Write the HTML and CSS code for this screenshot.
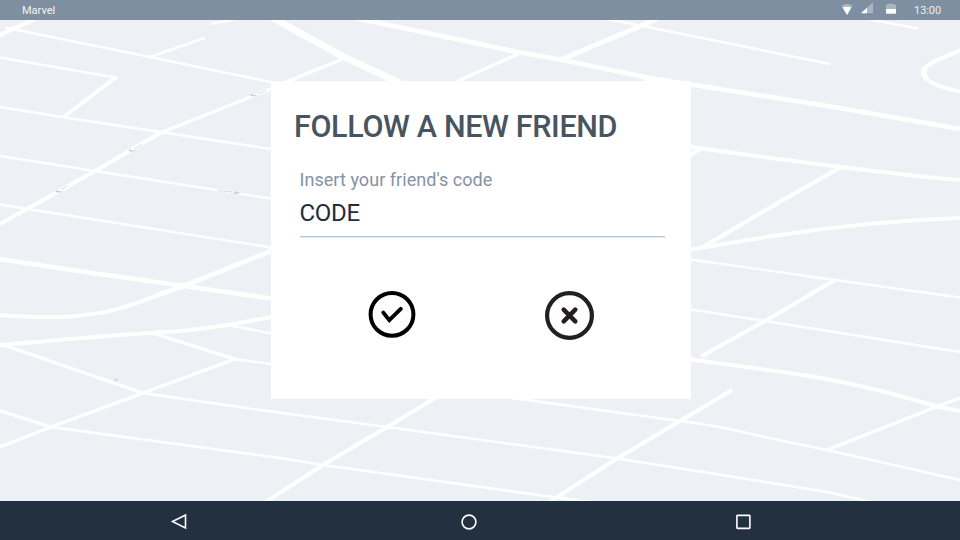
FILE: index.html
```html
<!DOCTYPE html>
<html lang="en">
<head>
<meta charset="utf-8">
<title>Follow a new friend</title>
<link rel="stylesheet" href="styles.css">
</head>
<body>
<div class="screen">
  <header class="status-bar">
    <span class="carrier">Marvel</span>
    <div class="status-icons">
      <svg class="status-svg" width="54" height="20" viewBox="841 0 54 20">
        <path d="M841.500 5.500Q847 2.500 852.500 5.500L847 15Z" fill="#aab5c2"/>
        <path d="M842.500 7.300Q847 6 851.500 7.300L847 15Z" fill="#fff"/>
        <path d="M861 13.300 873 2.300V13.300Z" fill="#aab5c2"/>
        <path d="M861 13.300 867 7.800V13.300Z" fill="#fff"/>
        <path d="M886 9V5.200Q886 4.500 887 4.500H888V3.800H893.500V4.500H895Q896 4.500 896 5.200V9Z" fill="#aab5c2"/>
        <path d="M886 9H896V13Q896 13.800 895.200 13.800H886.800Q886 13.800 886 13Z" fill="#fff"/>
      </svg>
      <span class="clock">13:00</span>
    </div>
  </header>

  <main class="stage">
    <svg class="map" viewBox="0 20 960 481" width="960" height="481" aria-hidden="true">
      <g class="road thin">
        <path d="M5 27.500 150 57 271 82"/>
        <path d="M150 57 204.500 38"/>
        <path d="M0 57.500 118 78"/>
        <path d="M0 107 62 117 160 132 271 149"/>
        <path d="M0 156 95 171 271 198.500"/>
        <path d="M0 204.500 28 209 271 247.500"/>
        <path d="M228 325 271 333.500"/>
        <path d="M235 359 271 364"/>
        <path d="M143 393 260 410 387 427 617 458.500 700 471.500 827 492 872 502"/>
        <path d="M51 427 280 458 323 465 553 497 590 502"/>
        <path d="M512 398 600 410 680 421Q715 425 760 436L827 450 960 480"/>
        <path d="M691 259.500 835 280 960 297.500"/>
        <path d="M691 309.500 765 321 960 352"/>
        <path d="M607 19 680 33.500 830 64"/>
        <path d="M868 19 918 28.500"/>
        <path d="M211 24 236 19"/>
      </g>
      <g class="road medium">
        <path d="M152 333 235 359 143 393 51 427 0 447"/>
        <path d="M5 345.500 143 393"/>
        <path d="M0 411 51 427"/>
        <path d="M827 450 937 406.500 960 398"/>
        <path d="M344 58.500 286 82"/>
        <path d="M520 53 457 81.500"/>
        <path d="M271 89 160 133"/>
        <path d="M645 81 655 78"/>
      </g>
      <g class="road wide">
        <path d="M160 133 95 171 43 200 0 224"/>
        <path d="M-1 35.500 35 19"/>
        <path d="M115 78 63.500 117"/>
        <path d="M0 345C50 341 100 336 152 333Q190 331 228 325L271 317"/>
        <path d="M0 315C25 317 60 318 82 315.500C115 312 135 304 160 294.500"/>
        <path d="M437 397 387 427 323 465 264 503"/>
        <path d="M732 390 680 421 617 458.500 548 503"/>
        <path d="M691 359.500 790 373Q860 383 937 406.500L960 411"/>
        <path d="M701 356.500 765 321 835 280"/>
        <path d="M691 249.500 773 236Q870 221 960 218"/>
        <path d="M702 247.500 783 200 841 167"/>
        <path d="M691 147Q770 158 841 167T960 180"/>
        <path d="M690 155 700 149"/>
        <path d="M960 50.500C935 60 923 66 923 73S938 87 960 91.500"/>
      </g>
      <g class="road major">
        <path d="M0 259 95 273.500 185 286 271 298.500"/>
        <path d="M155 296.300Q170 291 185 285.500L271 251"/>
        <path d="M355 18 520 52.500 560 59.500 647 77.500 691 84.500 840 108 960 129"/>
        <path d="M560 60 657 19"/>
      </g>
      <path class="road loop" d="M925.500 66.500Q921.500 73 927 79.500"/>
      <path class="road avenue" d="M273 18 342 56 400 83"/>
      <g class="direction">
        <path d="M266.500 90.500 258 94M142 144.500 134 149M68 185.500 61 190M218 190.500 232 192"/>
        <path class="tip" d="M249.500 95 253 93.700V95L258 95.500 253.500 96.500ZM128.500 150.500 131 148.800V150.300L137 150.500 131 151.700ZM55 191.500 57.500 189.700V191L63 191.500 58 192.800ZM241 193 235 191.300V192.400L231 193 236 194Z"/>
      </g>
      <path class="marker" d="M115 381.500 116 379M116.300 380.500 117.500 378.500"/>
    </svg>

    <section class="dialog">
      <h1 class="title">FOLLOW A NEW FRIEND</h1>
      <div class="field">
        <span class="label">Insert your friend's code</span>
        <span class="value">CODE</span>
      </div>
      <div class="actions">
        <svg class="action" width="50" height="50" viewBox="367 290 50 50" role="img" aria-label="Confirm">
          <circle cx="392" cy="314.400" r="21.400" fill="none" stroke="#000" stroke-width="4"/>
          <path d="M383.300 312.600 389.300 320.200 400.800 308.800" fill="none" stroke="#000" stroke-width="3.900" stroke-linecap="round"/>
        </svg>
        <svg class="action" width="50" height="50" viewBox="544 290 50 50" role="img" aria-label="Cancel">
          <circle cx="569.500" cy="315.500" r="22.400" fill="none" stroke="#231f20" stroke-width="4.200"/>
          <path d="M563.700 309.700 575.300 321.300M575.300 309.700 563.700 321.300" fill="none" stroke="#231f20" stroke-width="4.500" stroke-linecap="round"/>
        </svg>
      </div>
    </section>
  </main>

  <nav class="nav-bar">
    <svg class="nav-icon" width="20" height="20" viewBox="169 512 20 20"><path d="M172.500 521.500 185.500 515V528Z"/></svg>
    <svg class="nav-icon" width="20" height="20" viewBox="459 512 20 20"><circle cx="469" cy="522" r="6.900"/></svg>
    <svg class="nav-icon" width="20" height="20" viewBox="733 512 20 20"><rect x="736.900" y="515.400" width="13" height="13" rx=".6"/></svg>
  </nav>
</div>
</body>
</html>
```
FILE: styles.css
```css
* { box-sizing: border-box; }

body {
  margin: 0;
  font-family: Roboto, "Liberation Sans", sans-serif;
}

.screen {
  display: flex;
  flex-direction: column;
  width: 960px;
  height: 540px;
  overflow: hidden;
}

.status-bar {
  display: flex;
  justify-content: space-between;
  height: 20px;
  padding: 0 19px 0 22px;
  background: #7e8fa1;
  color: #fff;
  font-size: 11px;
  line-height: 22px;
}

.carrier { opacity: .9; }

.status-icons { display: flex; gap: 19.500px; }
.status-svg { display: block; overflow: visible; }
.clock { opacity: .85; letter-spacing: -.1px; }

.stage {
  display: grid;
  grid-template-columns: 271px 420px 1fr;
  grid-template-rows: 61px 318px 1fr;
  height: 481px;
  background: #edf1f6;
}

.map {
  grid-area: 1 / 1 / 4 / 4;
  display: block;
}

.road { fill: none; stroke: #fff; }
.thin { stroke-width: 2.4; }
.medium { stroke-width: 3.1; }
.wide { stroke-width: 4; }
.major { stroke-width: 4.7; }
.loop { stroke-width: 5.5; }
.avenue { stroke-width: 6.8; }

.direction { fill: none; stroke: #cfcfcf; stroke-width: .8; }
.tip { fill: #ccc; stroke: none; }
.marker { fill: none; stroke: #aaa4e8; stroke-width: .6; }

.dialog {
  grid-area: 2 / 2;
  z-index: 1;
  display: flex;
  flex-direction: column;
  padding: 28px 26px 0 23px;
  background: #fff;
}

.title {
  margin: 0;
  color: #485460;
  font-size: 30.5px;
  font-weight: 500;
  line-height: 36px;
  letter-spacing: -.35px;
  white-space: nowrap;
}

.field {
  display: flex;
  flex-direction: column;
  height: 74px;
  margin: 18px 0 0 6px;
  padding-top: 5px;
  border-bottom: 1px solid #b8c8dc;
  box-shadow: 0 1px #e4ebf2;
}

.label {
  margin-left: -.5px;
  color: #8492a6;
  font-size: 18px;
  line-height: 24px;
  letter-spacing: .05px;
}

.value {
  margin: 7px 0 0 -.5px;
  color: #1f2d3d;
  font-size: 24px;
  line-height: 28px;
  letter-spacing: -.3px;
}

.actions {
  display: flex;
  gap: 127px;
  margin: 53px 0 0 73px;
}

.action { display: block; }

.nav-bar {
  display: flex;
  align-items: flex-start;
  height: 39px;
  padding: 11px 207px 0 169px;
  justify-content: space-between;
  background: #22303f;
}

.nav-icon {
  display: block;
  fill: none;
  stroke: #fff;
  stroke-width: 1.6;
}

.nav-icon:nth-child(2) { margin-left: 16px; }
```
